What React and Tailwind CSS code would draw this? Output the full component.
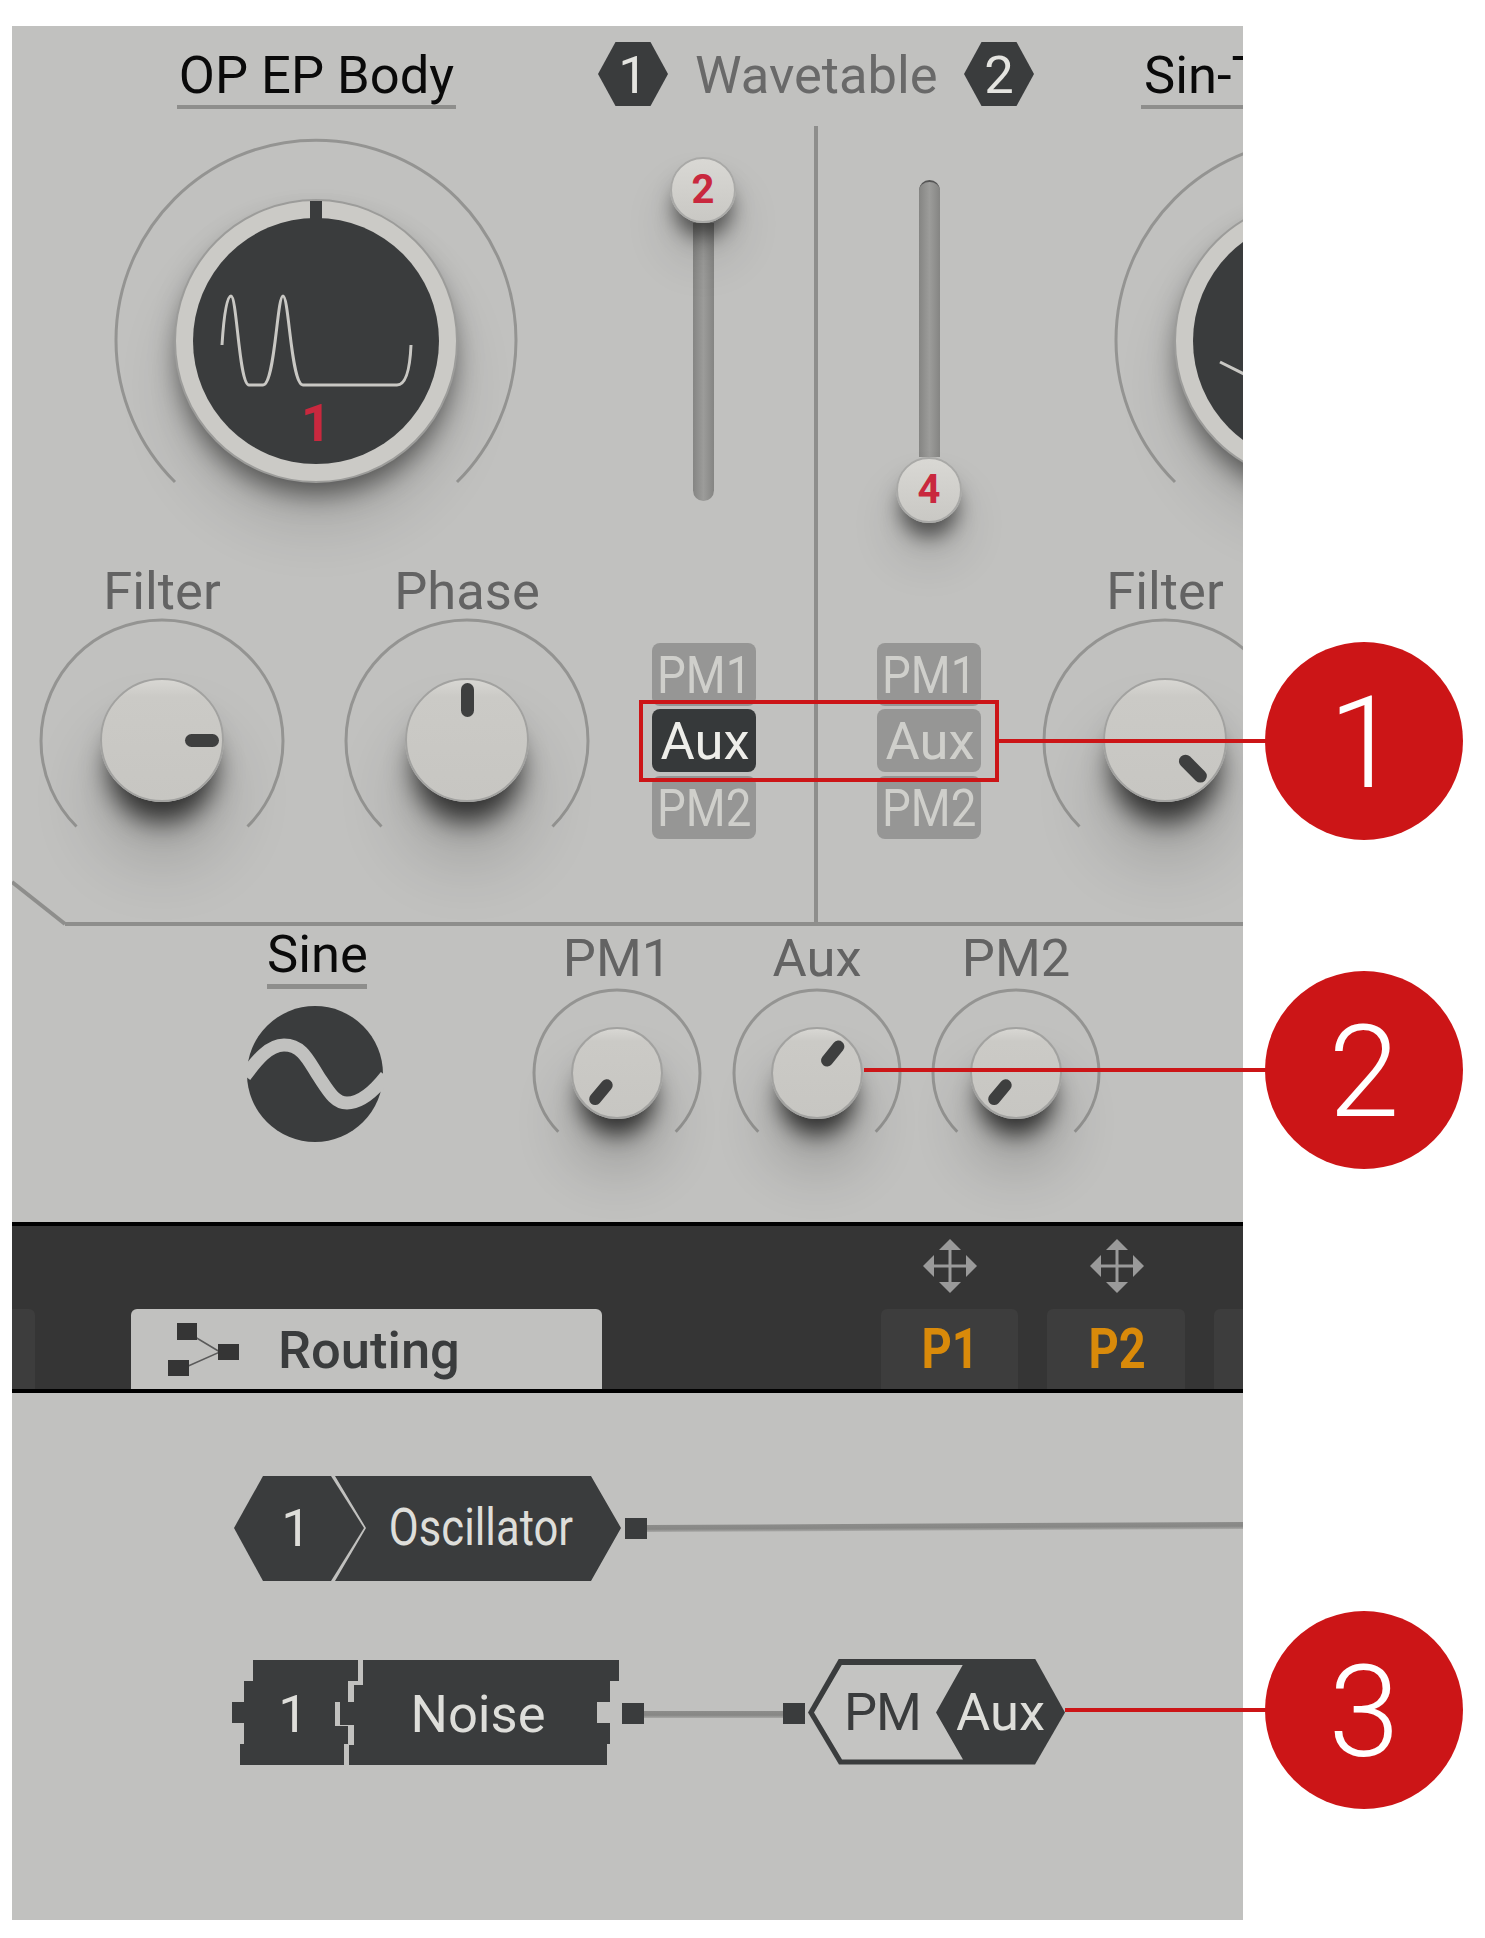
// Synth oscillator panel with numbered callouts
const SMALL_ARC = "M 27.3 144.7 A 83 83 0 1 1 144.7 144.7";
const MEDIUM_ARC = "M 38.5 209.5 A 121 121 0 1 1 209.5 209.5";
const LARGE_ARC = "M 63 345 A 200 200 0 1 1 345 345";

const HEX = "[clip-path:polygon(0_50%,25%_0,75%_0,100%_50%,75%_100%,25%_100%)]";
const KNOB_SKIN =
  "rounded-full border-2 border-[#a2a2a0] bg-[linear-gradient(180deg,#d8d7d3_0%,#cbcac6_14%,#c7c6c2_100%)]";

function Hex({ children }) {
  return (
    <div className={`${HEX} mt-[16px] w-[70px] h-[64px] shrink-0 bg-[#3a3c3d] flex items-center justify-center text-[#e4e4e0] leading-[60px]`}>
      <span className="translate-y-px">{children}</span>
    </div>
  );
}

function Title({ children, className }) {
  return (
    <div className={`mt-[18px] shrink-0 flex flex-col ${className}`}>
      <span className="translate-y-px text-[#0a0a0a] leading-[60px]">{children}</span>
      <div className="mt-px h-[4px] w-full bg-[#8e8e8c]" />
    </div>
  );
}

function Indicator({ rotate, bar }) {
  return (
    <div className={`absolute inset-0 flex justify-center ${rotate}`}>
      <div className={`rounded-full bg-[#3e3f3f] ${bar}`} />
    </div>
  );
}

function MediumKnob({ label, rotate }) {
  return (
    <div className="w-[248px] shrink-0 flex flex-col items-center">
      <span className="translate-y-px leading-[60px] text-[#636363]">{label}</span>
      <div className="relative -mt-[3px] w-[248px] h-[248px] flex items-center justify-center">
        <svg className="absolute inset-0" width="248" height="248" fill="none">
          <path d={MEDIUM_ARC} stroke="#949492" strokeWidth="3" />
        </svg>
        <div className={`relative -translate-y-px w-[124px] h-[124px] ${KNOB_SKIN} shadow-[0_28px_26px_-8px_rgba(0,0,0,0.7),0_56px_70px_0_rgba(0,0,0,0.18)]`}>
          <Indicator rotate={rotate} bar="mt-[3px] w-[13px] h-[34px]" />
        </div>
      </div>
    </div>
  );
}

function SmallKnob({ label, rotate, className }) {
  return (
    <div className={`w-[172px] shrink-0 flex flex-col items-center mt-[2px] ${className}`}>
      <span className="leading-[60px] text-[#636363]">{label}</span>
      <div className="relative -mt-px w-[172px] h-[172px] flex items-center justify-center">
        <svg className="absolute inset-0" width="172" height="172" fill="none">
          <path d={SMALL_ARC} stroke="#949492" strokeWidth="3" />
        </svg>
        <div className={`relative w-[92px] h-[92px] ${KNOB_SKIN} shadow-[0_24px_22px_-8px_rgba(0,0,0,0.7),0_48px_60px_0_rgba(0,0,0,0.2)]`}>
          <Indicator rotate={rotate} bar="mt-[4px] w-[12px] h-[30px]" />
        </div>
      </div>
    </div>
  );
}

function Dial({ wave, digit }) {
  return (
    <div className="relative mt-[11px] w-[408px] h-[408px] shrink-0 flex items-center justify-center">
      <svg className="absolute inset-0" width="408" height="408" fill="none">
        <path d={LARGE_ARC} stroke="#949492" strokeWidth="3" />
      </svg>
      <div className={`relative w-[284px] h-[284px] flex items-center justify-center rounded-full border-2 border-[#9c9c9a] bg-[#cbcac6] shadow-[0_16px_26px_-4px_rgba(0,0,0,0.5),0_44px_60px_0_rgba(0,0,0,0.12)]`}>
        <div className="w-[246px] h-[246px] rounded-full bg-[#3a3c3d] flex flex-col items-center">
          <svg className="block shrink-0" width="246" height="175" fill="none">
            <path d={wave} stroke="#c9c8c4" strokeWidth="3" />
          </svg>
          <span className="leading-[60px] font-bold text-[#c9283e]">{digit}</span>
        </div>
        <div className="absolute left-1/2 -translate-x-1/2 top-0 w-[12px] h-[20px] bg-[#3a3c3d]" />
      </div>
    </div>
  );
}

function SliderThumb({ digit }) {
  return (
    <div className="relative z-10 w-[66px] h-[66px] shrink-0 rounded-full border-2 border-[#a9a9a7] bg-[linear-gradient(180deg,#d9d8d4,#c9c8c4)] flex items-center justify-center text-[40px] leading-none font-bold text-[#c9283e] shadow-[0_18px_20px_-4px_rgba(0,0,0,0.55),0_34px_50px_0_rgba(0,0,0,0.14)]">
      {digit}
    </div>
  );
}

const TRACK = "w-[21px] bg-[linear-gradient(90deg,#858583,#9c9c9a_50%,#858583)]";

function Tags({ active, className }) {
  const tag = "h-[63px] w-[104px] rounded-[8px] flex items-center justify-center leading-[63px]";
  const narrow = "inline-block scale-x-[0.87] translate-y-px";
  return (
    <div className={`mt-[83px] w-[104px] shrink-0 flex flex-col text-[#cfcfcb] ${className}`}>
      <div className={`${tag} bg-[#969695]`}><span className={narrow}>PM1</span></div>
      <div className={`${tag} mt-[3px] ${active ? "bg-[#36393a] text-[#eeeeea]" : "bg-[#969695]"}`}>
        <span className="translate-x-px translate-y-px">Aux</span>
      </div>
      <div className={`${tag} mt-[4px] bg-[#969695]`}><span className={narrow}>PM2</span></div>
    </div>
  );
}

function MoveIcon({ className }) {
  return (
    <svg className={className} width="54" height="54" viewBox="0 0 54 54" fill="#9a9a9a">
      <path d="M27 0 L38 11 L16 11 Z" />
      <path d="M27 54 L38 43 L16 43 Z" />
      <path d="M0 27 L11 16 L11 38 Z" />
      <path d="M54 27 L43 16 L43 38 Z" />
      <rect x="25.5" y="10" width="3" height="34" />
      <rect x="10" y="25.5" width="34" height="3" />
    </svg>
  );
}

function RoutingIcon() {
  return (
    <svg className="shrink-0" width="71" height="53" viewBox="0 0 71 53" fill="#353535">
      <path d="M27 14 L52 29 L18 44" fill="none" stroke="#5a5a5a" strokeWidth="1.5" />
      <rect x="9" y="0" width="20" height="17" />
      <rect x="50" y="21" width="21" height="16" />
      <rect x="0" y="37" width="21" height="16" />
    </svg>
  );
}

function Port({ className }) {
  return <div className={`w-[22px] h-[21px] shrink-0 bg-[#3a3c3d] ${className}`} />;
}

const WIRE = "h-[7px] shrink-0 bg-[linear-gradient(180deg,#8c8c8a,#878785_60%,#a8a8a6)]";

function Callout({ children, className }) {
  return (
    <div className={`absolute w-[198px] h-[198px] rounded-full bg-[#cc1517] text-white flex items-center justify-center text-[128px] leading-none font-light pt-[3px] ${className}`}>
      {children}
    </div>
  );
}

export default function App() {
  return (
    <div className="relative w-[1485px] h-[1938px] bg-white pt-[26px] pl-[12px] [font-family:Roboto,sans-serif] text-[52.5px]">
      <div className="w-[1231px] h-[1894px] bg-[#c1c1bf] overflow-hidden flex flex-col">
        {/* Oscillator header */}
        <div className="h-[100px] shrink-0 flex items-start pl-[165px]">
          <Title className="w-[279px] items-center">OP EP Body</Title>
          <div className="ml-[142px]"><Hex>1</Hex></div>
          <span className="translate-y-px mt-[18px] ml-[27px] w-[241px] shrink-0 leading-[60px] text-[#696969]">Wavetable</span>
          <div className="ml-[28px]"><Hex>2</Hex></div>
          <Title className="ml-[107px] w-[279px]"><span className="pl-[3px]">Sin-Tri</span></Title>
        </div>

        {/* Oscillator columns */}
        <div className="relative h-[796px] shrink-0 flex">
          <svg className="absolute left-0 -bottom-[4px]" width="54" height="46" fill="none">
            <path d="M0 2 L53 44" stroke="#8e8e8c" strokeWidth="4" />
          </svg>

          <div className="w-[802px] shrink-0 flex flex-col">
            <div className="h-[434px] shrink-0 flex items-start pl-[100px]">
              <Dial
                digit="1"
                wave="M29 127 C31 95 34 78 38 78 C44 78 46 167 56 167 L70 167 C82 167 84 78 90 78 C96 78 98 167 110 167 L204 167 C213 167 217 150 218 127"
              />
              <div className="ml-[150px] mt-[31px] w-[66px] flex flex-col items-center">
                <SliderThumb digit="2" />
                <div className={`${TRACK} h-[278px] rounded-b-full`} />
              </div>
            </div>
            <div className="flex items-start pl-[26px]">
              <MediumKnob label="Filter" rotate="rotate-90" />
              <div className="ml-[57px]"><MediumKnob label="Phase" rotate="rotate-0" /></div>
              <Tags active className="ml-[61px]" />
            </div>
          </div>

          <div className="w-[4px] shrink-0 bg-[#8e8e8c]" />

          <div className="w-[700px] shrink-0 flex flex-col">
            <div className="h-[434px] shrink-0 flex items-start pl-[78px]">
              <div className="mt-[54px] w-[66px] shrink-0 flex flex-col items-center">
                <div className={`${TRACK} h-[277px] rounded-t-full border-t-2 border-[#555]`} />
                <SliderThumb digit="4" />
              </div>
              <div className="ml-[150px]">
                <Dial wave="M27 144 L75 168" />
              </div>
            </div>
            <div className="flex items-start pl-[59px]">
              <Tags />
              <div className="ml-[60px]"><MediumKnob label="Filter" rotate="rotate-[135deg]" /></div>
            </div>
          </div>
        </div>
        <div className="ml-[53px] h-[4px] shrink-0 bg-[#8e8e8c]" />

        {/* Sine oscillator and PM amounts */}
        <div className="h-[296px] shrink-0 flex items-start pl-[237px]">
          <div className="-mt-[3px] w-[135px] shrink-0 flex flex-col items-center">
            <span className="translate-x-px translate-y-px leading-[60px] text-[#0a0a0a]">Sine</span>
            <div className="mt-px w-[100px] h-[5px] bg-[#8e8e8c]" />
            <svg className="mt-[15px] -ml-[3px] shrink-0" width="140" height="140" viewBox="0 0 140 140" fill="none">
              <circle cx="70" cy="70" r="68" fill="#3a3c3d" />
              <path d="M0 72 C12 56 24 41 39 41 C58 41 64 58 74 73 C84 88 90 99 102 99 C116 99 130 86 141 72" stroke="#c1c1bf" strokeWidth="13" />
            </svg>
          </div>
          <SmallKnob label="PM1" rotate="rotate-[220deg]" className="ml-[147px]" />
          <SmallKnob label="Aux" rotate="rotate-[39deg]" className="ml-[28px]" />
          <SmallKnob label="PM2" rotate="rotate-[220deg]" className="ml-[27px]" />
        </div>

        {/* Tab bar */}
        <div className="relative shrink-0 box-content h-[163px] border-y-4 border-black bg-[#353535] flex flex-col">
          <div className="h-[83px] shrink-0 flex items-start pl-[911px] pt-[13px]">
            <MoveIcon className="shrink-0" />
            <MoveIcon className="shrink-0 ml-[113px]" />
          </div>
          <div className="h-[80px] flex items-stretch">
            <div className="w-[23px] shrink-0 bg-[#3d3d3d] rounded-tr-[6px]" />
            <div className="ml-[96px] w-[471px] shrink-0 bg-[#c1c1bf] rounded-t-[6px] flex items-center pl-[37px]">
              <RoutingIcon />
              <span className="ml-[39px] translate-y-px leading-[80px] font-medium text-[#3a3c3d]">Routing</span>
            </div>
            <div className="ml-[279px] w-[137px] shrink-0 bg-[#3d3d3d] rounded-t-[6px] pl-[2px] flex items-center justify-center text-[56px] font-bold text-[#d98a0a]">
              <span className="inline-block scale-x-[0.84]">P1</span>
            </div>
            <div className="ml-[29px] w-[138px] shrink-0 bg-[#3d3d3d] rounded-t-[6px] pl-[3px] flex items-center justify-center text-[56px] font-bold text-[#d98a0a]">
              <span className="inline-block scale-x-[0.84]">P2</span>
            </div>
            <div className="ml-[29px] w-[100px] shrink-0 bg-[#3d3d3d] rounded-t-[6px]" />
          </div>
        </div>

        {/* Routing page */}
        <div className="flex-1 pt-[83px] pl-[222px] text-[#dededa]">
          <div className="h-[105px] flex items-center">
            <div className="w-[130px] h-[105px] shrink-0 bg-[#3a3c3d] pr-[6px] flex items-center justify-center [clip-path:polygon(0_52px,29px_0,97px_0,130px_52px,97px_105px,29px_105px)]">
              1
            </div>
            <div className="-ml-[29px] w-[286px] h-[105px] shrink-0 bg-[#3a3c3d] pl-[6px] flex items-center justify-center [clip-path:polygon(0_0,256px_0,286px_52px,256px_105px,0_105px,31px_52px)]">
              <span className="inline-block scale-x-[0.83] -translate-y-px">Oscillator</span>
            </div>
            <Port className="ml-[4px]" />
            <div className={`${WIRE} w-[600px] origin-left -rotate-[0.3deg]`} />
          </div>

          <div className="-ml-[2px] mt-[78px] h-[107px] flex items-center">
            <div className="w-[126px] h-[105px] shrink-0 bg-[#3a3c3d] pr-[4px] flex items-center justify-center [clip-path:polygon(21px_0,126px_0,126px_21px,116px_21px,116px_42px,103px_42px,103px_66px,116px_66px,116px_84px,112px_84px,112px_105px,8px_105px,8px_84px,12px_84px,12px_63px,0_63px,0_42px,12px_42px,12px_21px,21px_21px)]">
              <span className="translate-y-[2px]">1</span>
            </div>
            <div className="-ml-[18px] w-[279px] h-[105px] shrink-0 bg-[#3a3c3d] pr-[3px] flex items-center justify-center [clip-path:polygon(23px_0,279px_0,279px_21px,270px_21px,270px_42px,257px_42px,257px_63px,270px_63px,270px_84px,267px_84px,267px_105px,9px_105px,9px_85px,14px_85px,14px_65px,0_65px,0_42px,14px_42px,14px_25px,23px_25px)]">
              <span className="translate-y-[2px]">Noise</span>
            </div>
            <Port className="ml-[3px] translate-y-px" />
            <div className={`${WIRE} w-[139px] translate-y-[2px]`} />
            <Port className="translate-y-px" />
            <div className="ml-[3px] -translate-y-px w-[257px] h-[106px] shrink-0 bg-[#3a3c3d] flex [clip-path:polygon(31px_0,227px_0,257px_54px,227px_106px,31px_106px,0_54px)]">
              <div className="ml-[6px] mt-[6px] w-[149px] h-[95px] shrink-0 bg-[#c4c4c2] text-[#3a3c3d] pl-[30px] leading-[95px] tracking-[-1px] [clip-path:polygon(28px_0,149px_0,122px_48px,149px_95px,28px_95px,0_48px)]">
                PM
              </div>
              <span className="-ml-[7px] leading-[106px]">Aux</span>
            </div>
          </div>
        </div>
      </div>

      {/* Annotations on top of the screenshot */}
      <div className="absolute left-[639px] top-[700px] w-[360px] h-[82px] border-4 border-[#cc1517]" />
      <div className="absolute left-[999px] top-[739px] w-[270px] h-[4px] bg-[#cc1517]" />
      <div className="absolute left-[864px] top-[1068px] w-[405px] h-[4px] bg-[#cc1517]" />
      <div className="absolute left-[1065px] top-[1708px] w-[204px] h-[4px] bg-[#cc1517]" />
      <Callout className="left-[1265px] top-[642px]">1</Callout>
      <Callout className="left-[1265px] top-[971px]">2</Callout>
      <Callout className="left-[1265px] top-[1611px]">3</Callout>
    </div>
  );
}
